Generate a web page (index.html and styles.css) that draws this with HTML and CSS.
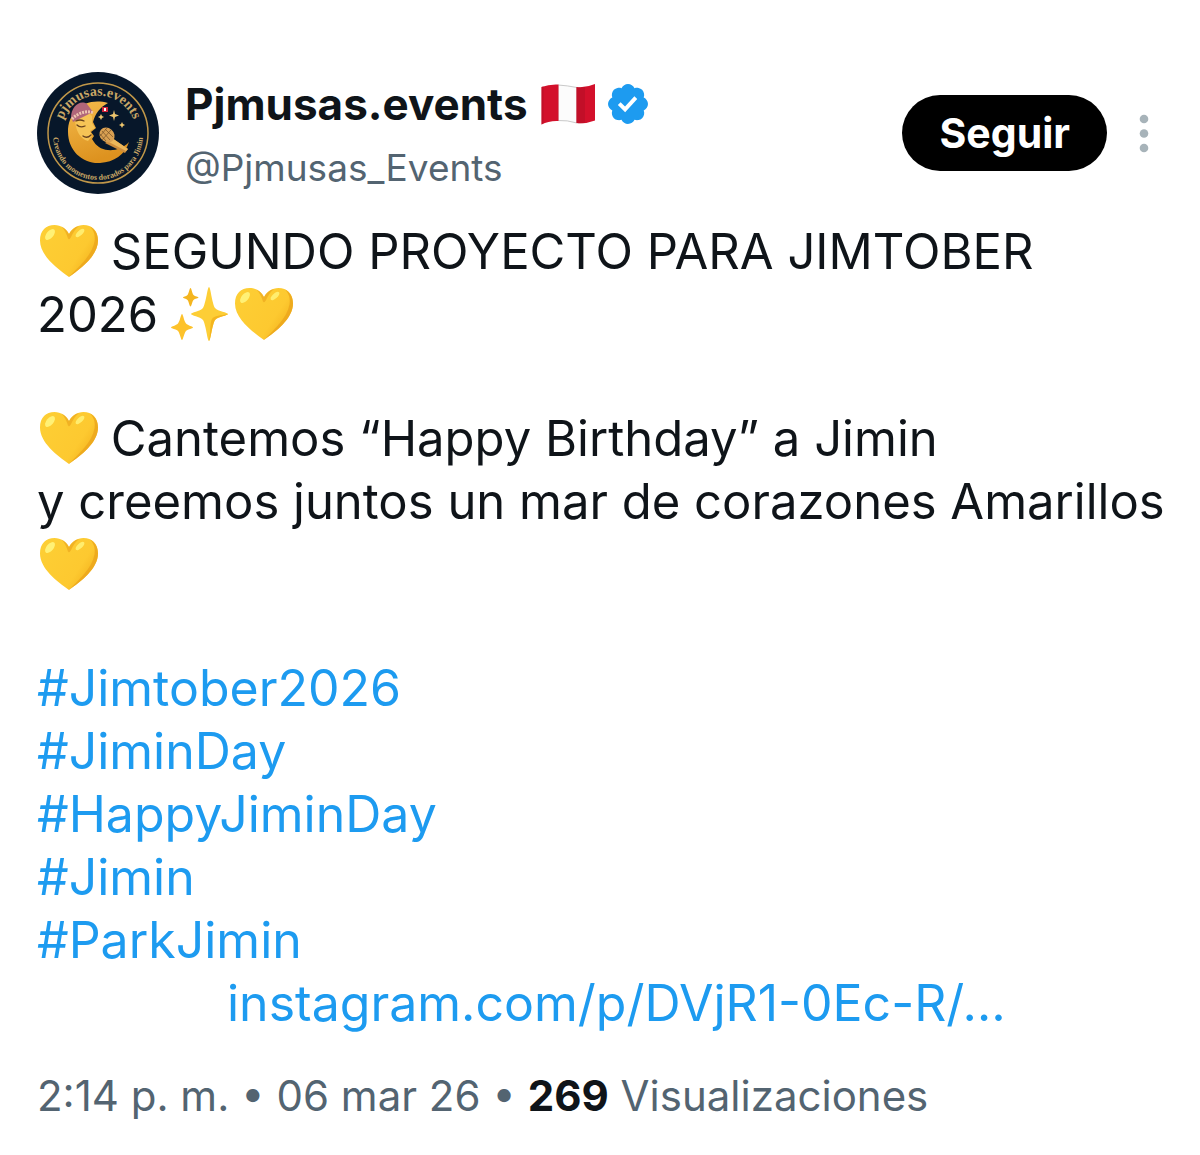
FILE: index.html
```html
<!DOCTYPE html>
<html lang="es">
<head>
<meta charset="utf-8">
<meta name="viewport" content="width=device-width, initial-scale=1">
<title>Pjmusas.events</title>
<link rel="stylesheet" href="styles.css">
</head>
<body>
<svg class="defs" aria-hidden="true">
  <defs>
    <linearGradient id="heart-fill" x1="0" y1="0" x2="1" y2="0.6">
      <stop offset="0" stop-color="#fdcf35"/>
      <stop offset="0.75" stop-color="#fdc930"/>
      <stop offset="1" stop-color="#f4b41f"/>
    </linearGradient>
    <symbol id="heart" viewBox="0 0 60 60">
      <path fill="url(#heart-fill)" d="M32 57C20 48.500 3 35.500 3 20.500C3 10.500 9 5 17.500 5C24 5 29 8.500 32 14C35 8.500 40 5 46.500 5C55 5 61 10.500 61 20.500C61 35.500 44 48.500 32 57Z"/>
      <path fill="#eba51b" d="M32 57C44 48.500 61 35.500 61 20.500C61 13.500 57.500 9 53 6.500C57 10.500 58.500 15.500 57.500 21.500C55 35.500 42 46.500 32 57Z" opacity="0.8"/>
      <path fill="#eba51b" d="M32 14C30.500 11 28 8 24.500 6.500C27.500 9.500 29.500 13.500 31 18.500C32 20.500 33.500 18.500 34.500 16C36 12.500 38.500 9 42 6C37.500 7 34 10 32 14Z" opacity="0.65"/>
      <ellipse cx="13" cy="14.500" rx="3.500" ry="6.500" transform="rotate(40 13 14.500)" fill="#fff176"/>
      <ellipse cx="43" cy="13" rx="2.500" ry="5.500" transform="rotate(48 43 13)" fill="#fff176" opacity="0.9"/>
    </symbol>
    <symbol id="sparkles" viewBox="0 0 60 60">
      <path fill="#fdce36" d="M37 4C38.500 4 40 20 43 25C46 28.500 56 29.500 56 31C56 32.500 46 33.500 43 37C40 42 38.500 58 37 58C35.500 58 34 42 31 37C28 33.500 19 32.500 19 31C19 29.500 28 28.500 31 25C34 20 35.500 4 37 4Z"/>
      <path fill="#f4b51f" d="M37 58C38.500 58 40 42 43 37C46 33.500 56 32.500 56 31C49 32.500 42 32.500 40 36C38 39 38.500 50 37 58Z"/>
      <path fill="#f4b51f" d="M18.500 5C19.500 5 20 10 21.500 12C23 13.500 26.500 13.500 26.500 14.500C26.500 15.500 23 15.500 21.500 17C20 19 19.500 23.500 18.500 23.500C17.500 23.500 17 19 15.500 17C14 15.500 11 15.500 11 14.500C11 13.500 14 13.500 15.500 12C17 10 17.500 5 18.500 5Z"/>
      <path fill="#fdc22b" d="M10 31C11 31 12 38 14 40.500C16 42.500 21 43.500 21 44.500C21 45.500 16 46 14 48C12 50.500 11 57 10 57C9 57 8 50.500 6 48C4 46-1 45.500-1 44.500C-1 43.500 4 42.500 6 40.500C8 38 9 31 10 31Z"/>
    </symbol>
  </defs>
</svg>

<article class="post">
  <header class="post-header">
    <svg class="avatar" viewBox="0 0 122 122" role="img" aria-label="Logo de Pjmusas.events">
      <defs>
        <path id="arc-top" d="M25.500 48A38 38 0 0 1 96.500 48"/>
        <path id="arc-bottom" d="M16 63A45 45 0 0 0 106 63"/>
        <linearGradient id="moon" x1="0" y1="0" x2="0.3" y2="1">
          <stop offset="0" stop-color="#f3ba4b"/>
          <stop offset="1" stop-color="#dd921f"/>
        </linearGradient>
      </defs>
      <circle cx="61" cy="61" r="61" fill="#07172a"/>
      <circle cx="61" cy="61" r="50" fill="none" stroke="#c09749" stroke-width="1.500"/>
      <path fill="url(#moon)" d="M71 31C48 25 31 39 31 60C31 79 46 92 63 91C77 90 88 83 92 70C82 81 64 81 57 70L55 67L57 64L54 60L59 56L56 50C58 42 63 35 71 31Z"/>
      <path fill="#f6c456" d="M38 46C42 40 51 39 55 44L55 51L58 56L53 59L55 64L51 69C43 67 38 58 38 46Z"/>
      <path fill="#b0667a" d="M34 45C34 35 43 27 50 32L56 40L36 50Z"/>
      <path fill="none" stroke="#edc4b0" stroke-width="3" stroke-dasharray="2 1" d="M35 47C41 41 49 38 57 41"/>
      <path fill="none" stroke="#68411d" stroke-width="1.300" stroke-linecap="round" d="M40 53Q43 56 48 54M46 64Q50 67 54 63M39 49Q43 47 47 49"/>
      <path fill="#cf8d3c" d="M75 66L91 77L88 81L68 71Z"/>
      <path fill="#edb75a" d="M75 66L91 77L89 79L70 69Z"/>
      <ellipse cx="70" cy="63" rx="8" ry="7" transform="rotate(40 70 63)" fill="#d9a052"/>
      <path fill="none" stroke="#775026" stroke-width="0.700" d="M65 59L73 68M68 57L76 65M63 62L69 69M74 58L65 68M70 56L63 64"/>
      <path fill="#cf243b" d="M65 35H71V40H65Z"/>
      <path fill="#fff" d="M67 36H69V39H67Z"/>
      <g fill="#edc56d">
        <path d="M77 38L78 42L82 43.500L78 45L77 49L76 45L72 43.500L76 42Z"/>
        <path d="M64 42L65 44L67 45L65 46L64 48L63 46L61 45L63 44Z"/>
        <path d="M85 50L86 52L88 53L86 54L85 56L84 54L82 53L84 52Z"/>
      </g>
      <text class="seal-title"><textPath href="#arc-top" startOffset="50%" text-anchor="middle">pjmusas.events</textPath></text>
      <text class="seal-motto"><textPath href="#arc-bottom" startOffset="50%" text-anchor="middle">Creando momentos dorados para Jimin</textPath></text>
    </svg>

    <div class="identity">
      <div class="name-row">
        <strong class="name">Pjmusas.events</strong>
        <svg class="flag" viewBox="0 0 56 42" role="img" aria-label="Perú">
          <path fill="#fcfcfc" stroke="#c9c9c9" stroke-width="1" d="M18 2Q27 2.500 37 4.500V40Q27 37 18 37.500Z"/>
          <path fill="#d3102b" d="M1.500 4Q9 1 18.500 1.500V38Q9 37.500 1.500 41.500Z"/>
          <path fill="#d3102b" d="M36.500 4Q46 5 55 1V37.500Q46 41 36.500 40Z"/>
          <path fill="#b20d26" d="M1.500 4L3.500 3.200V40.600L1.500 41.500ZM36.500 4Q41 4.500 45 4V40Q41 40.600 36.500 40Z" opacity="0.5"/>
        </svg>
        <svg class="badge" viewBox="1.600 1.600 18.800 18.800" role="img" aria-label="Cuenta verificada">
          <path fill="#1d9bf0" d="M20.396 11c-.018-.646-.215-1.275-.57-1.816-.354-.54-.852-.972-1.438-1.246.223-.607.27-1.264.14-1.897-.131-.634-.437-1.218-.882-1.687-.47-.445-1.053-.75-1.687-.882-.633-.13-1.29-.083-1.897.14-.273-.587-.704-1.086-1.245-1.44S11.647 1.62 11 1.604c-.646.017-1.273.213-1.813.568s-.969.854-1.24 1.44c-.608-.223-1.267-.272-1.902-.14-.635.13-1.22.436-1.69.882-.445.47-.749 1.055-.878 1.688-.13.633-.08 1.29.144 1.896-.587.274-1.087.705-1.443 1.245-.356.54-.555 1.17-.574 1.817.02.647.218 1.276.574 1.817.356.54.856.972 1.443 1.245-.224.606-.274 1.263-.144 1.896.13.634.433 1.218.877 1.688.47.443 1.054.747 1.687.878.633.132 1.29.084 1.897-.136.274.586.705 1.084 1.246 1.439.54.354 1.17.551 1.816.569.647-.016 1.276-.213 1.817-.567s.972-.854 1.245-1.44c.604.239 1.266.296 1.903.164.636-.132 1.22-.447 1.68-.907.46-.46.776-1.044.908-1.681s.075-1.299-.165-1.903c.586-.274 1.084-.705 1.439-1.246.354-.54.551-1.17.569-1.816zM9.662 14.85l-3.429-3.428 1.293-1.302 2.072 2.072 4.4-4.794 1.347 1.246z"/>
        </svg>
      </div>
      <div class="handle">@Pjmusas_Events</div>
    </div>

    <div class="actions">
      <button class="follow" type="button">Seguir</button>
      <button class="menu" type="button" aria-label="Más opciones">
        <svg class="dots" viewBox="0 0 10 40" aria-hidden="true">
          <g fill="#a7b3b9"><circle cx="5" cy="6" r="4.300"/><circle cx="5" cy="20.500" r="4.300"/><circle cx="5" cy="35" r="4.300"/></g>
        </svg>
      </button>
    </div>
  </header>

  <div class="post-body">
    <p><svg class="emoji" role="img" aria-label="Corazón amarillo"><use href="#heart"/></svg> SEGUNDO PROYECTO PARA JIMTOBER<br>2026 <svg class="emoji" role="img" aria-label="Destellos"><use href="#sparkles"/></svg><svg class="emoji" role="img" aria-label="Corazón amarillo"><use href="#heart"/></svg></p>
    <p><svg class="emoji" role="img" aria-label="Corazón amarillo"><use href="#heart"/></svg> Cantemos “Happy Birthday” a Jimin<br>y creemos juntos un mar de corazones Amarillos <svg class="emoji" role="img" aria-label="Corazón amarillo"><use href="#heart"/></svg></p>
    <div class="links">
      <a href="#Jimtober2026">#Jimtober2026</a>
      <a href="#JiminDay">#JiminDay</a>
      <a href="#HappyJiminDay">#HappyJiminDay</a>
      <a href="#Jimin">#Jimin</a>
      <a href="#ParkJimin">#ParkJimin</a>
      <a class="external" href="#instagram">instagram.com/p/DVjR1-0Ec-R/…</a>
    </div>
  </div>

  <footer class="meta">2:14 p. m. • 06 mar 26 • <strong>269</strong> Visualizaciones</footer>
</article>
</body>
</html>
```
FILE: styles.css
```css
* {
  box-sizing: border-box;
}

body {
  margin: 0;
  background: #fff;
  color: #0f1419;
  font-family: Inter, "Liberation Sans", sans-serif;
}

.defs {
  position: absolute;
  width: 0;
  height: 0;
}

.post {
  padding: 72px 28px 28px 37px;
}

.post-header {
  display: flex;
  align-items: flex-start;
  gap: 26px;
  margin-bottom: 20px;
}

.avatar {
  flex: none;
  width: 122px;
  height: 122px;
}

.seal-title,
.seal-motto {
  font-family: "Liberation Serif", serif;
  fill: #c9a766;
}

.seal-title {
  font-size: 14px;
  font-weight: 700;
}

.seal-motto {
  font-size: 8px;
  font-weight: 700;
}

.identity {
  flex: 1;
  min-width: 0;
  line-height: 64px;
}

.name-row {
  display: flex;
  align-items: center;
  gap: 12px;
}

.name {
  font-size: 44px;
  font-weight: 700;
}

.flag {
  width: 56px;
  height: 42px;
}

.badge {
  width: 40px;
  height: 40px;
}

.handle {
  color: #536471;
  font-size: 37px;
}

.actions {
  display: flex;
  align-items: center;
  gap: 9px;
  height: 122px;
}

.follow {
  height: 76px;
  padding: 0 37px;
  border: 0;
  border-radius: 38px;
  background: #000;
  color: #fff;
  font: inherit;
  font-size: 41px;
  font-weight: 700;
}

.menu {
  display: flex;
  align-items: center;
  justify-content: center;
  width: 56px;
  height: 76px;
  padding: 0;
  border: 0;
  background: none;
}

.dots {
  width: 10px;
  height: 40px;
}

.post-body {
  display: flex;
  flex-direction: column;
  gap: 61px;
  font-size: 49px;
  line-height: 63px;
}

.post-body p {
  margin: 0;
}

.emoji {
  width: 60px;
  height: 60px;
  vertical-align: -11px;
  overflow: visible;
}

.emoji use {
  overflow: visible;
}

#heart,
#sparkles {
  overflow: visible;
}

.links {
  display: flex;
  flex-direction: column;
  align-items: flex-start;
  font-size: 50px;
}

.links a {
  color: #1d9bf0;
  text-decoration: none;
}

.links .external {
  margin-left: 190px;
}

.meta {
  margin-top: 31px;
  color: #536471;
  font-size: 42px;
  line-height: 60px;
}

.meta strong {
  color: #0f1419;
  font-weight: 700;
}
```
